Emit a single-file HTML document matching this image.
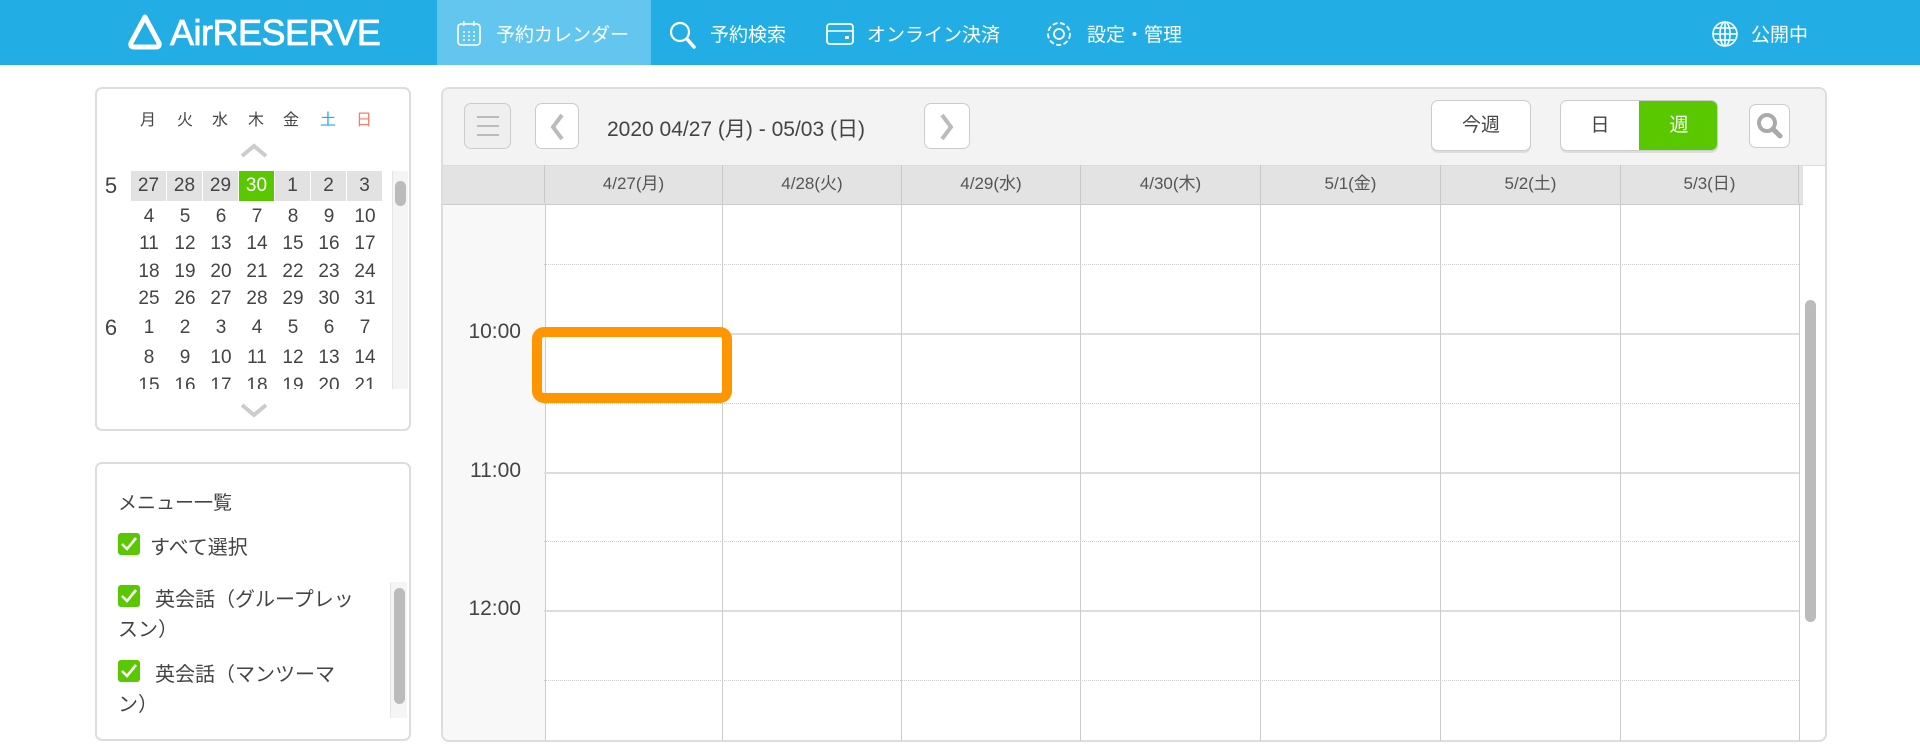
<!DOCTYPE html>
<html><head><meta charset="utf-8"><style>
*{margin:0;padding:0;box-sizing:border-box}
body{width:1920px;height:750px;position:relative;overflow:hidden;background:#fff;font-family:"Liberation Sans","Noto Sans CJK JP",sans-serif;color:#444}
.a{position:absolute}
.hdr{left:0;top:0;width:1920px;height:65px;background:#22AEE4}
.nav{color:#fff;font-size:19px;top:20px;white-space:nowrap}
.box{border:2px solid #ddd;border-radius:7px;background:#fff}
.wd{top:106px;width:30px;text-align:center;font-size:16px}
.d{width:36px;text-align:center;font-size:19px}
.btn{background:#fff;border:1px solid #ccc;border-radius:7px;box-shadow:0 2px 0 #ddd}
.dh{top:165px;height:38px;line-height:38px;text-align:center;font-size:17px;color:#555;border-left:1px solid #c8c8c8}
.vl{top:203px;height:538px;width:1px;background:#ccc}
.hl{left:544px;width:1255px;height:2px;background:#ddd}
.dl{left:544px;width:1255px;height:0;border-top:1px dotted #ccc}
.tl{left:441px;width:80px;text-align:right;font-size:21px;color:#444}
.cb{width:22px;height:22px;background:#5AC800;border-radius:3px}
</style></head><body>
<div class="a hdr"></div>
<div class="a" style="left:437px;top:0;width:214px;height:65px;background:#63C6EE"></div>
<!-- logo -->
<svg class="a" style="left:126px;top:13px" width="38" height="38" viewBox="0 0 38 38"><path d="M19 4 L5 30 Q4 34 8 34 L30 34 Q34 34 33 30 Z" fill="none" stroke="#fff" stroke-width="5" stroke-linejoin="round"/></svg>
<div class="a" style="left:170px;top:12px;color:#fff;font-size:36px;letter-spacing:-0.5px;-webkit-text-stroke:0.8px #fff">AirRESERVE</div>
<!-- nav -->
<svg class="a" style="left:456px;top:21px" width="26" height="26" viewBox="0 0 26 26"><rect x="2" y="3" width="22" height="21" rx="3" fill="none" stroke="#fff" stroke-width="1.6"/><g fill="#fff"><rect x="7" y="0" width="1.6" height="5"/><rect x="17" y="0" width="1.6" height="5"/><circle cx="8" cy="11" r="1"/><circle cx="13" cy="11" r="1"/><circle cx="18" cy="11" r="1"/><circle cx="8" cy="15" r="1"/><circle cx="13" cy="15" r="1"/><circle cx="18" cy="15" r="1"/><circle cx="8" cy="19" r="1"/><circle cx="13" cy="19" r="1"/><circle cx="18" cy="19" r="1"/></g></svg>
<div class="a nav" style="left:496px">予約カレンダー</div>
<svg class="a" style="left:668px;top:20px" width="30" height="30" viewBox="0 0 30 30"><circle cx="12" cy="12" r="9" fill="none" stroke="#fff" stroke-width="2.2"/><path d="M19 19 L26 27" stroke="#fff" stroke-width="3.5" stroke-linecap="round"/></svg>
<div class="a nav" style="left:710px">予約検索</div>
<svg class="a" style="left:826px;top:22px" width="28" height="24" viewBox="0 0 28 24"><rect x="1" y="2" width="26" height="20" rx="3" fill="none" stroke="#fff" stroke-width="1.8"/><path d="M1 9 H27" stroke="#fff" stroke-width="1.5"/><rect x="19" y="14" width="4" height="3" fill="#fff"/></svg>
<div class="a nav" style="left:867px">オンライン決済</div>
<svg class="a" style="left:1044px;top:19px" width="30" height="30" viewBox="0 0 30 30"><circle cx="15" cy="15" r="11" fill="none" stroke="#fff" stroke-width="1.8" stroke-dasharray="5 2.5"/><circle cx="15" cy="15" r="5" fill="none" stroke="#fff" stroke-width="1.8"/></svg>
<div class="a nav" style="left:1087px">設定・管理</div>
<svg class="a" style="left:1711px;top:20px" width="28" height="28" viewBox="0 0 28 28" fill="none" stroke="#fff" stroke-width="1.6"><circle cx="14" cy="14" r="12"/><ellipse cx="14" cy="14" rx="5" ry="12"/><path d="M2 14H26M4 8H24M4 20H24M14 2V26"/></svg>
<div class="a nav" style="left:1751px">公開中</div>

<!-- mini calendar -->
<div class="a box" style="left:95px;top:87px;width:316px;height:344px"></div>
<div class="a wd" style="left:133px">月</div><div class="a wd" style="left:170px">火</div><div class="a wd" style="left:205px">水</div><div class="a wd" style="left:241px">木</div><div class="a wd" style="left:276px">金</div><div class="a wd" style="left:313px;color:#1aaee6">土</div><div class="a wd" style="left:349px;color:#f47e6e">日</div>
<svg class="a" style="left:240px;top:143px" width="28" height="16" viewBox="0 0 28 16"><path d="M2 13 L14 3 L26 13" fill="none" stroke="#ccc" stroke-width="4"/></svg>
<svg class="a" style="left:240px;top:402px" width="28" height="16" viewBox="0 0 28 16"><path d="M2 3 L14 13 L26 3" fill="none" stroke="#ccc" stroke-width="4"/></svg>
<div class="a" style="left:392px;top:171px;width:16px;height:218px;background:#f5f5f5;border-left:1px solid #e5e5e5"></div>
<div class="a" style="left:395px;top:181px;width:11px;height:25px;background:#bbb;border-radius:6px"></div>
<div class="a" style="left:96px;top:171px;width:300px;height:218px;overflow:hidden">
<div class="a" style="left:0;top:0;font-size:22px;width:30px;text-align:center;line-height:30px">5</div>
<div class="a" style="left:0;top:142px;font-size:22px;width:30px;text-align:center;line-height:30px">6</div>
<div id="g"></div>
</div>
<script>
(function(){var g=document.getElementById('g');var rows=[[27,28,29,30,1,2,3],[4,5,6,7,8,9,10],[11,12,13,14,15,16,17],[18,19,20,21,22,23,24],[25,26,27,28,29,30,31],[1,2,3,4,5,6,7],[8,9,10,11,12,13,14],[15,16,17,18,19,20,21]];var ys=[0,31,58,86,113,142,172,200];var h='';rows.forEach(function(r,i){r.forEach(function(v,j){var x=35+j*36;var st='left:'+x+'px;top:'+ys[i]+'px;height:30px;line-height:30px;';if(i==0){st+='background:'+(j==3?'#5AC800;color:#fff':'#e2e2e2')+';width:35px;';}h+='<div class="a d" style="'+st+'">'+v+'</div>';});});g.outerHTML=h;})();
</script>

<!-- menu box -->
<div class="a box" style="left:95px;top:462px;width:316px;height:279px"></div>
<div class="a" style="left:118px;top:488px;font-size:19px">メニュー一覧</div>
<div class="a cb" style="left:118px;top:533px"></div><svg class="a" style="left:118px;top:533px" width="22" height="22"><path d="M4 11 L9 16 L18 5" fill="none" stroke="#fff" stroke-width="2.6"/></svg>
<div class="a" style="left:150px;top:531px;font-size:20px">すべて選択</div>
<div class="a cb" style="left:118px;top:585px"></div><svg class="a" style="left:118px;top:585px" width="22" height="22"><path d="M4 11 L9 16 L18 5" fill="none" stroke="#fff" stroke-width="2.6"/></svg>
<div class="a" style="left:155px;top:583px;font-size:20px">英会話（グループレッ</div>
<div class="a" style="left:118px;top:613px;font-size:20px">スン）</div>
<div class="a cb" style="left:118px;top:660px"></div><svg class="a" style="left:118px;top:660px" width="22" height="22"><path d="M4 11 L9 16 L18 5" fill="none" stroke="#fff" stroke-width="2.6"/></svg>
<div class="a" style="left:155px;top:658px;font-size:20px">英会話（マンツーマ</div>
<div class="a" style="left:118px;top:688px;font-size:20px">ン）</div>
<div class="a" style="left:390px;top:582px;width:17px;height:136px;background:#f5f5f5;border-left:1px solid #e5e5e5"></div>
<div class="a" style="left:394px;top:588px;width:11px;height:116px;background:#bbb;border-radius:6px"></div>

<!-- main panel -->
<div class="a" style="left:441px;top:87px;width:1386px;height:655px;border:2px solid #ddd;border-radius:8px;background:#fff;overflow:hidden">
<div class="a" style="left:0;top:0;width:1386px;height:77px;background:#f3f3f3;border-bottom:1px solid #ddd"></div>
<div class="a" style="left:0;top:77px;width:1360px;height:39px;background:#e3e3e3;border-bottom:1px solid #ccc"></div>
<div class="a" style="left:0;top:116px;width:103px;height:540px;background:#f8f8f8;border-right:1px solid #ccc"></div>
</div>
<div class="a btn" style="left:464px;top:103px;width:47px;height:46px;background:#efefef;box-shadow:none"></div>
<svg class="a" style="left:475px;top:114px" width="26" height="24"><path d="M2 3H24M2 12H24M2 21H24" stroke="#bbb" stroke-width="2"/></svg>
<div class="a btn" style="left:535px;top:103px;width:44px;height:46px;box-shadow:none"></div>
<svg class="a" style="left:548px;top:112px" width="18" height="30"><path d="M14 3 L5 15 L14 27" fill="none" stroke="#bbb" stroke-width="4"/></svg>
<div class="a" style="left:607px;top:113px;font-size:21px;color:#444">2020 04/27 (月) - 05/03 (日)</div>
<div class="a btn" style="left:924px;top:103px;width:46px;height:46px;box-shadow:none"></div>
<svg class="a" style="left:938px;top:112px" width="18" height="30"><path d="M4 3 L13 15 L4 27" fill="none" stroke="#bbb" stroke-width="4"/></svg>
<div class="a btn" style="left:1431px;top:100px;width:100px;height:51px;text-align:center;line-height:50px;font-size:19px">今週</div>
<div class="a btn" style="left:1560px;top:100px;width:158px;height:51px;overflow:hidden">
<div class="a" style="left:0;top:0;width:78px;height:50px;line-height:50px;text-align:center;font-size:19px">日</div>
<div class="a" style="left:78px;top:0;width:80px;height:50px;line-height:50px;text-align:center;font-size:19px;background:#5AC800;color:#fff">週</div></div>
<div class="a btn" style="left:1749px;top:104px;width:41px;height:44px;box-shadow:none"></div>
<svg class="a" style="left:1754px;top:110px" width="32" height="32"><circle cx="13" cy="13" r="8" fill="none" stroke="#aaa" stroke-width="4"/><path d="M19 19 L26 26" stroke="#aaa" stroke-width="5" stroke-linecap="round"/></svg>

<div class="a dh" style="left:544px;width:178px">4/27(月)</div>
<div class="a dh" style="left:722px;width:179px">4/28(火)</div>
<div class="a dh" style="left:901px;width:179px">4/29(水)</div>
<div class="a dh" style="left:1080px;width:180px">4/30(木)</div>
<div class="a dh" style="left:1260px;width:180px">5/1(金)</div>
<div class="a dh" style="left:1440px;width:180px">5/2(土)</div>
<div class="a dh" style="left:1620px;width:179px;border-right:1px solid #c8c8c8">5/3(日)</div>

<div class="a dl" style="top:264px"></div><div class="a dl" style="top:403px"></div><div class="a dl" style="top:541px"></div><div class="a dl" style="top:680px"></div>
<div class="a hl" style="top:333px"></div><div class="a hl" style="top:472px"></div><div class="a hl" style="top:610px"></div>
<div class="a vl" style="left:722px"></div><div class="a vl" style="left:901px"></div><div class="a vl" style="left:1080px"></div><div class="a vl" style="left:1260px"></div><div class="a vl" style="left:1440px"></div><div class="a vl" style="left:1620px"></div><div class="a vl" style="left:1799px"></div>
<div class="a tl" style="top:320px">10:00</div>
<div class="a tl" style="top:459px">11:00</div>
<div class="a tl" style="top:597px">12:00</div>
<div class="a" style="left:1805px;top:300px;width:11px;height:322px;background:#bbb;border-radius:6px"></div>
<div class="a" style="left:532px;top:327px;width:200px;height:76px;border:10px solid #FF9500;border-radius:12px"></div>
</body></html>
